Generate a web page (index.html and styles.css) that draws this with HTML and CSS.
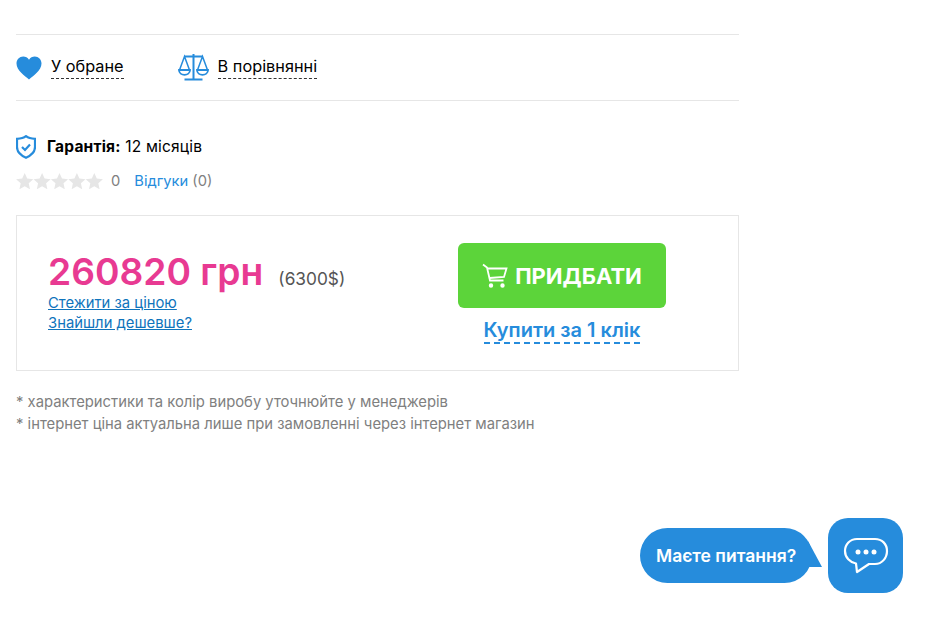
FILE: index.html
```html
<!DOCTYPE html>
<html lang="uk">
<head>
    <meta charset="UTF-8">
    <meta name="viewport" content="width=device-width, initial-scale=1.0">
    <title>Товар</title>
    <link rel="stylesheet" href="styles.css">
</head>
<body>
    <div class="product">
        <div class="actions">
            <a class="action" href="#">
                <svg width="26" height="24" viewBox="0 0 26 24"><path fill="#268cdc" d="M13 23.500C9 20 .5 14.500 .5 7.500.5 3.500 3.500.5 7.200.5c2.400 0 4.500 1.200 5.800 3.200C14.300 1.700 16.400.5 18.800.5c3.700 0 6.700 3 6.700 7 0 7-8.500 12.500-12.500 16z"/></svg>
                <span class="action-text">У обране</span>
            </a>
            <a class="action" href="#">
                <svg width="31" height="27" viewBox="0 0 31 27" fill="none" stroke="#268cdc" stroke-width="2"><path d="M15.500 0v25.500M6.500 25.500h18M6.500 2.500h18"/><path d="M6.500 2.500 1.500 16h10zM24.500 2.500l-5 13.500h10z" stroke-width="1.500"/><path d="M1 16c0 6.500 11 6.500 11 0zM19 16c0 6.500 11 6.500 11 0z" stroke-width="1.800"/></svg>
                <span class="action-text">В порівнянні</span>
            </a>
        </div>

        <div class="guarantee">
            <svg width="20" height="24" viewBox="0 0 20 24" fill="none" stroke="#268cdc" stroke-width="2.200"><path d="M10 1.200c2 1.600 5 2.500 9 2.600v8.200c0 4.700-3.600 8.300-9 10.700-5.400-2.400-9-6-9-10.700V3.800c4-.1 7-1 9-2.600z"/><path d="M6 12l3 3 5-5.500"/></svg>
            <span><b>Гарантія:</b> 12 місяців</span>
        </div>

        <div class="rating">
            <svg class="stars" width="87" height="16" viewBox="0 0 87 16" fill="#e6e6e6">
                <path id="star" d="M8.700 0l2.500 5.600 6.100.6-4.600 4.100 1.300 6-5.300-3.100-5.300 3.100 1.300-6L.1 6.200l6.100-.6z"/>
                <use href="#star" x="17.400"/>
                <use href="#star" x="34.800"/>
                <use href="#star" x="52.200"/>
                <use href="#star" x="69.600"/>
            </svg>
            <span class="rating-count">0</span>
            <span class="reviews"><a href="#">Відгуки</a> (0)</span>
        </div>

        <div class="buy-box">
            <div class="price-col">
                <div class="price-row">
                    <span class="price">260820 грн</span>
                    <span class="price-usd">(6300$)</span>
                </div>
                <a class="price-link" href="#">Стежити за ціною</a>
                <a class="price-link" href="#">Знайшли дешевше?</a>
            </div>
            <div class="buy-col">
                <button class="buy-btn" type="button">
                    <svg width="26" height="25" viewBox="0 0 26 25" fill="none" stroke="#fff" stroke-width="1.800"><path d="M1 1.500l4 3 3 13h13.500"/><path d="M5.500 5.500H24.500l-2.500 8.500-14.500 1"/><circle cx="9" cy="22.500" r="1.300" fill="#fff"/><circle cx="20.500" cy="22.500" r="1.300" fill="#fff"/></svg>
                    ПРИДБАТИ
                </button>
                <a class="one-click" href="#">Купити за 1 клік</a>
            </div>
        </div>

        <p class="note">* характеристики та колір виробу уточнюйте у менеджерів</p>
        <p class="note">* інтернет ціна актуальна лише при замовленні через інтернет магазин</p>
    </div>

    <div class="chat">
        <div class="chat-bubble">Маєте питання?</div>
        <div class="chat-btn">
            <svg width="46" height="38" viewBox="0 0 46 38" fill="none" stroke="#fff" stroke-width="2.200"><path d="M14 2h18c7 0 12 5 12 12s-5 13-12 13h-6l-12 8-1-8.500C7 25.500 2 20.500 2 14S7 2 14 2z" stroke-linejoin="round"/><circle cx="15" cy="15" r="2.500" fill="#fff" stroke="none"/><circle cx="23" cy="15" r="2.500" fill="#fff" stroke="none"/><circle cx="31" cy="15" r="2.500" fill="#fff" stroke="none"/></svg>
        </div>
    </div>
</body>
</html>
```

FILE: styles.css
```css
body {
    margin: 0;
    padding: 34px 0 0 16px;
    font-family: Inter, "Noto Sans", sans-serif;
    color: #000;
    background: #fff;
}

a {
    color: inherit;
}

.product {
    width: 723px;
}

.actions {
    display: flex;
    align-items: center;
    gap: 54px;
    height: 65px;
    border-top: 1px solid #e6e6e6;
    border-bottom: 1px solid #e6e6e6;
}

.action {
    display: flex;
    align-items: center;
    gap: 9px;
    text-decoration: none;
    font-size: 16.300px;
}

.action + .action {
    gap: 9px;
}

.action-text {
    line-height: 20px;
    padding-bottom: 2px;
    border-bottom: 1px dashed #333;
}

.guarantee {
    display: flex;
    align-items: center;
    gap: 11px;
    margin-top: 33px;
    font-size: 15.500px;
    letter-spacing: 0.200px;
}

.guarantee svg {
    margin: 1px 0 -1px;
}

.rating {
    display: flex;
    align-items: center;
    height: 22px;
    margin-top: 12px;
    font-size: 14.700px;
    color: #808080;
}

.rating-count {
    margin-left: 8px;
}

.reviews {
    margin-left: 14px;
}

.reviews a {
    color: #268cdc;
    text-decoration: none;
}

.buy-box {
    display: flex;
    box-sizing: border-box;
    height: 156px;
    margin-top: 23px;
    padding: 27px 0 0 31px;
    border: 1px solid #e6e6e6;
}

.price-col {
    width: 410px;
    padding-top: 6px;
}

.price-row {
    display: flex;
    align-items: baseline;
    gap: 15px;
    height: 44px;
}

.price {
    font-size: 37.200px;
    font-weight: 600;
    line-height: 46px;
    color: #e83a92;
}

.price-usd {
    font-size: 17.300px;
    color: #555;
}

.price-link {
    display: block;
    font-size: 14.800px;
    line-height: 20px;
    color: #0f74bc;
}

.buy-col {
    display: flex;
    flex-direction: column;
    align-items: center;
    width: 208px;
}

.buy-btn {
    display: flex;
    align-items: center;
    justify-content: center;
    gap: 7px;
    width: 208px;
    height: 65px;
    border: none;
    border-radius: 6px;
    background-color: #5cd43a;
    color: #fff;
    font-family: inherit;
    font-size: 22px;
    font-weight: 700;
    cursor: pointer;
}

.one-click {
    margin-top: 10px;
    font-size: 20px;
    font-weight: 600;
    line-height: 24px;
    color: #268cdc;
    text-decoration: none;
    border-bottom: 2px dashed #268cdc;
}

.note {
    margin: 0;
    font-size: 14.800px;
    line-height: 22px;
    color: #808080;
}

.buy-box + .note {
    margin-top: 20px;
}

.chat {
    position: fixed;
    right: 22px;
    bottom: 24px;
    display: flex;
    align-items: center;
    gap: 16px;
}

.chat-bubble {
    position: relative;
    display: flex;
    align-items: center;
    box-sizing: border-box;
    width: 172px;
    height: 55px;
    padding-left: 16px;
    border-radius: 28px;
    background-color: #268cdc;
    color: #fff;
    font-size: 17.500px;
    font-weight: 600;
    white-space: nowrap;
}

.chat-bubble::after {
    content: "";
    position: absolute;
    right: -10px;
    bottom: 16px;
    border-left: 14px solid #268cdc;
    border-top: 26px solid transparent;
}

.chat-btn {
    display: flex;
    align-items: center;
    justify-content: center;
    width: 75px;
    height: 75px;
    border-radius: 20px;
    background-color: #268cdc;
}
```
